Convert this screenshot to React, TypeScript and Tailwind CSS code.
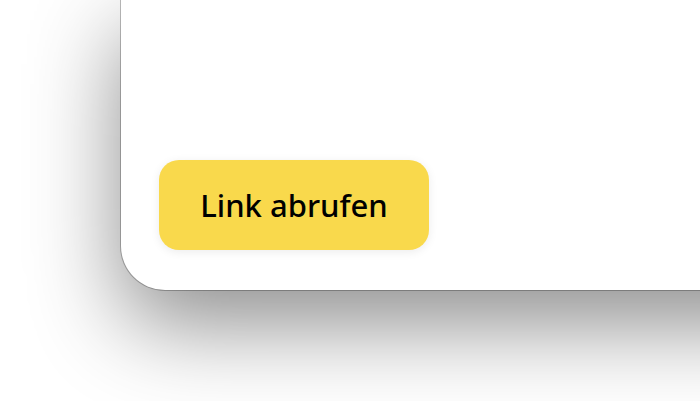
export default function App() {
  return (
    <div className="h-[401px] w-[700px] overflow-hidden bg-white">
      <div className="ml-[121px] mr-[-200px] flex h-[290px] flex-col justify-end rounded-bl-[44px] bg-white pb-[40px] pl-[38px] shadow-[0_0_0_1px_rgba(0,0,0,0.25),0_34px_90px_rgba(0,0,0,0.45)]">
        <button
          type="button"
          className="flex h-[90px] w-[270px] items-center justify-center rounded-[20px] bg-[#f9d94c] text-[31px] font-medium text-black shadow-[0_2px_10px_rgba(0,0,0,0.08)]"
          style={{ fontFamily: '"Noto Sans", sans-serif' }}
        >
          Link abrufen
        </button>
      </div>
    </div>
  );
}
